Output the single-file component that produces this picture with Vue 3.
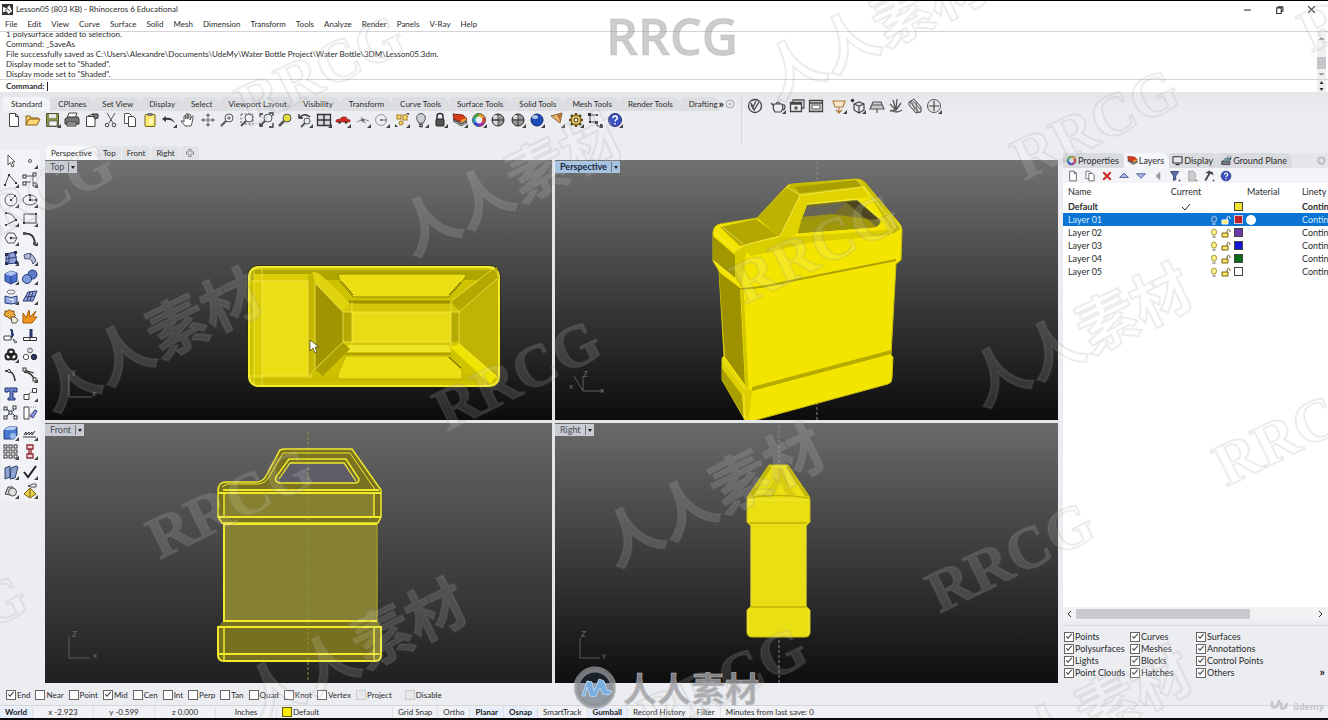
<script setup>
import { ref } from 'vue'

const menus = ['File', 'Edit', 'View', 'Curve', 'Surface', 'Solid', 'Mesh', 'Dimension', 'Transform', 'Tools', 'Analyze', 'Render', 'Panels', 'V-Ray', 'Help']
const history = [
  '1 polysurface added to selection.',
  'Command: _SaveAs',
  'File successfully saved as C:\\Users\\Alexandre\\Documents\\UdeMy\\Water Bottle Project\\Water Bottle\\3DM\\Lesson05.3dm.',
  'Display mode set to "Shaded".',
  'Display mode set to "Shaded".',
]
const toolTabs = ['Standard', 'CPlanes', 'Set View', 'Display', 'Select', 'Viewport Layout', 'Visibility', 'Transform', 'Curve Tools', 'Surface Tools', 'Solid Tools', 'Mesh Tools', 'Render Tools', 'Drafting']

const corner = '<path d="M16 12v4h-4z" fill="#444"/>'
const page = '<path d="M3.500 1.500h6l3 3v10h-9z M9.500 1.500v3h3" fill="#fff" stroke="#444"/>'
const lens = '<circle cx="10" cy="6" r="4" fill="#eef2f5" stroke="#555"/><path d="M7 9l-5 5" stroke="#555" stroke-width="2"/>'
const ball = (c, d) => `<circle cx="8" cy="8" r="6" fill="${c}" stroke="${d}"/><ellipse cx="6" cy="5" rx="3" ry="2" fill="#fff" opacity=".65"/>`
const help = '<circle cx="8" cy="8" r="6.500" fill="#3b50c0" stroke="#24307c"/><path d="M5.800 6.300q.2-2.300 2.300-2.300 2.200.1 2.200 2 0 1.200-1.400 1.800-.8.500-.8 1.700M8 11v1.500" fill="none" stroke="#fff" stroke-width="1.500"/>'
const wheel = '<g fill="none" stroke-width="3"><path d="M8 3a5 5 0 0 1 4.300 2.500" stroke="#e6a020"/><path d="M12.300 5.500a5 5 0 0 1 0 5" stroke="#d8402c"/><path d="M12.300 10.500A5 5 0 0 1 8 13" stroke="#b030b0"/><path d="M8 13a5 5 0 0 1-4.300-2.500" stroke="#3848d8"/><path d="M3.700 10.500a5 5 0 0 1 0-5" stroke="#20a0c0"/><path d="M3.700 5.500A5 5 0 0 1 8 3" stroke="#50b030"/></g><circle cx="8" cy="8" r="6.500" fill="none" stroke="#444" stroke-width=".8"/>'
const layerIcon = '<path d="M1 9l8 5 6-3-1-3z" fill="#f4f4ea" stroke="#444" stroke-width=".8"/><path d="M1 6l8 5 6-3v2l-6 3-8-5z" fill="#555"/><path d="M1 2l10 1 4 4-6 3-7-3z" fill="#d8401c" stroke="#802810"/><path d="M9 8l5-2v2l-5 3z" fill="#e8a030"/>'
const sq = (x, y) => `<rect x="${x}" y="${y}" width="3" height="3" fill="#fff" stroke="#333"/>`

const icons = {
  page,
  open: '<path d="M1 13V4h4l1 2h7v2" fill="#f3cf70" stroke="#8a5a10"/><path d="M1 13l3-6h11l-3 6z" fill="#ffd978" stroke="#8a5a10"/>',
  save: '<path d="M1.500 1.500h12v13h-12z" fill="#8a9650" stroke="#4d5530"/><rect x="4" y="2" width="7" height="4" fill="#e5e8ea"/><rect x="4" y="9" width="8" height="5" fill="#f5f5f5" stroke="#555" stroke-width=".7"/>' + corner,
  print: '<path d="M5 1h8l-2 5H3z" fill="#fff" stroke="#444"/><path d="M1 7l3-2h10l1 2v5H1z" fill="#777" stroke="#333"/><path d="M3 10h9v4H3z" fill="#ddd" stroke="#333"/><path d="M4 12h7" stroke="#333"/>',
  props: '<path d="M2.500 4.500h7l1.500 2v8h-8.500z" fill="#fff" stroke="#444"/><path d="M8 2l6 0v4l-3 1z" fill="#777" stroke="#333"/><path d="M4 4l5-2" stroke="#444"/>',
  cut: '<path d="M4 1l6 10M12 1L6 11" stroke="#555" fill="none"/><circle cx="4" cy="13" r="1.800" fill="none" stroke="#444"/><circle cx="11" cy="13" r="1.800" fill="none" stroke="#444"/>',
  copy: '<path d="M2.500 1.500h5l2 2v8h-7z" fill="#fff" stroke="#555"/><path d="M6.500 4.500h5l2 2v8h-7z" fill="#fff" stroke="#444"/>',
  paste: '<rect x="3" y="2.500" width="10" height="12" rx="1" fill="#ffe96a" stroke="#6d6425"/><rect x="5.500" y="1" width="5" height="3" fill="#777"/><path d="M8 6h3v6H6" fill="#fff6b8"/>',
  undo: '<path d="M1 7l4-3v2q6-1 9 5-4-4-9-3v2z" fill="#333"/>' + corner,
  hand: '<path d="M5 14L1 9q1-1 3 1V4q1-1 1.500 0L6 7V2q1-1 1.800 0V7l1-5q1-.5 1.500.5L10 8l2-4q1-.3 1.200.8L12 11l-1 3z" fill="#fff" stroke="#444" stroke-width=".9"/>',
  rotate: '<path d="M8 3v10M3 8h10" stroke="#666"/><path d="M8 1l2 3H6zM8 15l2-3H6zM1 8l3-2v4zM15 8l-3-2v4z" fill="#666"/>',
  zoom: lens + '<path d="M8 6h4M10 4v4" stroke="#666"/>',
  zoomWin: '<rect x="2" y="2" width="12" height="10" fill="none" stroke="#666" stroke-dasharray="2 1.500"/>' + lens,
  zoomExt: lens + '<path d="M2 5V2h3M11 1h4v3M15 11v4h-4M2 11v3h3" fill="none" stroke="#333" stroke-width="1.300"/>',
  zoomSel: '<circle cx="10" cy="6" r="4" fill="#e5dc40" stroke="#555"/><path d="M7 9l-5 5" stroke="#555" stroke-width="2.500"/>',
  zoomBack: '<path d="M2 2v4h4M2 6q5-6 11-1" fill="none" stroke="#333" stroke-width="1.400"/><circle cx="10" cy="9" r="3" fill="#e8eef2" stroke="#555"/><path d="M8 11l-4 4" stroke="#555" stroke-width="2"/>' + corner,
  grid4: '<path d="M1.500 2.500h13v11h-13z" fill="#d8dce0" stroke="#333" stroke-width="1.300"/><path d="M8 2v12M1 8h14" stroke="#333" stroke-width="1.500"/>' + corner,
  car: '<path d="M1 8l4-1 2-2h4l1 2 3 1v2H1z" fill="#d02a22" stroke="#8a1c18" stroke-width=".6"/><circle cx="4.500" cy="10.500" r="1.300" fill="#333"/><circle cx="11" cy="10.500" r="1.300" fill="#333"/>' + corner,
  cplane: '<path d="M2 10l6-3 6 2M6 5l3 5M5 8l6 3" stroke="#888" fill="none"/><circle cx="8" cy="8" r="1.500" fill="#666"/>' + corner,
  objSnap: '<circle cx="7" cy="8" r="5.500" fill="none" stroke="#999"/><path d="M7 8h6" stroke="#666"/><circle cx="7" cy="8" r="1" fill="#555"/>' + corner,
  points: '<rect x="3" y="3" width="4" height="4" fill="#ffdc6a" stroke="#a37818"/><rect x="9" y="3" width="4" height="5" fill="#ffdc6a" stroke="#a37818"/><circle cx="7" cy="11" r="2" fill="#ffdc6a" stroke="#a37818"/><path d="M12 1h3v2zM1 15v-3l3 3z" fill="#333"/>' + corner,
  bulb: '<path d="M5.500 11Q5 9 3.800 7.500 3 2 8 1.500 13 2 12.200 7.500 11 9 10.500 11z" fill="#ccd0d2" stroke="#555"/><path d="M6 12.500h4M6 14.500h4" stroke="#444" stroke-width="1.400"/>' + corner,
  lock: '<path d="M5 7V4q0-2.500 3-2.500T11 4v3" fill="none" stroke="#333" stroke-width="1.500"/><rect x="4" y="7" width="8" height="7" rx="1" fill="#555" stroke="#222"/>' + corner,
  layers: layerIcon + corner,
  wheel: wheel + corner,
  ballHalf: ball('#999', '#222') + '<path d="M8 2v12M2 8h12" stroke="#333"/><path d="M3 9h4.500v4.500Q4 13 3 9" fill="#ddd"/>',
  ballHalf2: ball('#999', '#222') + '<path d="M8 2v12M2 8h12" stroke="#333"/>' + corner,
  ballBlue: ball('#1c4cb8', '#10286a') + corner,
  cone: '<path d="M2 4l11-3-2 10z" fill="#e8b878" stroke="#8c5a28"/><path d="M8 3l3 6 1-7z" fill="#b87038"/>' + corner,
  gear: '<path d="M8 1v14M1 8h14M3 3l10 10M13 3L3 13" stroke="#5b4d1c" stroke-width="2.500"/><circle cx="8" cy="8" r="5" fill="#d8bc58" stroke="#5b4d1c"/><circle cx="8" cy="8" r="2" fill="#f0f0f0" stroke="#5b4d1c"/>' + corner,
  dims: '<path d="M3 3v7h6M4 3h6M10 11v3h3" fill="none" stroke="#444"/><path d="M1 1h3v3H1zM9 2h2v2H9zM2 9h2v2H2zM8 9h3v3H8zM13 12h2v3h-2z" fill="#333"/>' + corner,
  help: help + corner,
  vray: '<circle cx="8" cy="8" r="6.500" fill="none" stroke="#444" stroke-width="1.300"/><path d="M4 7l3 5 5-8M7 12L4 5M9 3l-3 6" fill="none" stroke="#444" stroke-width="1.300"/>',
  teapot: '<path d="M4 6h8q2 4-1 8H5Q2 10 4 6zM6 6q2-4 4 0M4 8L1 5M12 7q3-1 3 2t-3 3" fill="none" stroke="#444" stroke-width="1.200"/>' + corner,
  frames: '<path d="M4 4V2h11v8h-2" fill="none" stroke="#555" stroke-width="1.300"/><path d="M1.500 4.500h11v9h-11zM2 6h10" fill="#eee" stroke="#444" stroke-width="1.300"/><circle cx="7" cy="10" r="1.800" fill="#555"/>',
  frame: '<path d="M1.500 2.500h13v11h-13zM2 5h12" fill="#ddd" stroke="#444" stroke-width="1.300"/><rect x="4" y="7" width="8" height="4" fill="#f4f4f4" stroke="#555"/>',
  light: '<path d="M2 3h12l-2 6H4zM8 9v6M5 12l3 3 3-3" fill="#f8e6cf" stroke="#b07838" stroke-width="1.100"/>' + corner,
  box: '<path d="M4 6l5-2 5 2v6l-5 3-5-3zM4 6l5 2 5-2M9 8v7" fill="none" stroke="#444" stroke-width="1.200"/><circle cx="2.500" cy="2.500" r="1.700" fill="#333"/>' + corner,
  dome: '<path d="M1 11l3-7h8l3 7zM3 7h10M8 11v4" fill="#ccc" stroke="#555" stroke-width="1.200"/>',
  grass: '<path d="M8 12L5 2M8 12l1-11M8 12l5-7M8 12L2 6M3 12q5 4 11 0M8 12l-6 1" fill="none" stroke="#555" stroke-width="1.300"/>',
  clip: '<path d="M2 4l5-3 7 8v5L9 15 2 7z" fill="#ddd" stroke="#444"/><path d="M3 4l9 10M6 3l8 9M4 2l4 10M9 4l1 10" stroke="#666"/>',
  plusBall: '<circle cx="8" cy="8" r="6.500" fill="#e4e6e8" stroke="#555"/><path d="M8 3v10M3 8h10" fill="none" stroke="#444" stroke-width="1.200"/>' + corner,
  arrow: '<path d="M5 2v10l2.500-2.500L9 14l2-1-2-4h3z" fill="#fff" stroke="#555"/>',
  dot: '<circle cx="8" cy="8" r="1.500" fill="#fff" stroke="#555"/>' + corner,
  poly: '<path d="M2 13L6 3l7 8" fill="none" stroke="#555"/><path d="M1 12h2v2H1zM5 2h2v2H5zM12 10h2v2h-2z" fill="#333"/>' + corner,
  curve: '<path d="M3 4h9q-3 4 1 9M3 10h6" fill="none" stroke="#555"/>' + sq(1, 3) + sq(11, 1) + sq(11, 11) + sq(1, 10) + corner,
  circle: '<circle cx="8" cy="8" r="6" fill="none" stroke="#555"/><path d="M8 8l4-4" stroke="#555"/><path d="M7 7h2v2H7zM11 3h2v2h-2z" fill="#333"/>' + corner,
  ellipse: '<ellipse cx="8" cy="8" rx="7" ry="5" fill="none" stroke="#555"/><path d="M8 3v5h6" fill="none" stroke="#555"/><path d="M7 7h2v2H7zM7 2h2v2H7zM13 7h2v2h-2z" fill="#333"/>' + corner,
  arc: '<path d="M3 2q6 0 10 7L3 14" fill="none" stroke="#555"/><path d="M2 1h2v2H2zM12 8h2v2h-2zM2 13h2v2H2z" fill="#333"/>' + corner,
  rect: '<rect x="2" y="3" width="12" height="9" fill="none" stroke="#444"/><path d="M1 11h2v2H1zM13 2h2v2h-2z" fill="#333"/>' + corner,
  polygon: '<path d="M2 8l3-5h6l3 5-3 5H5z" fill="none" stroke="#555"/><path d="M8 8h6" stroke="#555"/><circle cx="8" cy="8" r="1.300" fill="#333"/>' + corner,
  fillet: '<path d="M2 4q10-2 11 10" fill="none" stroke="#333" stroke-width="1.800"/><path d="M1 2h3v3H1zM11 12h3v3h-3z" fill="#555"/>' + corner,
  surfPts: '<path d="M3 4l9-2 2 11-11 1z" fill="#8fa0da" stroke="#303a70"/><path d="M6 3v11M3 9l11-2" stroke="#303a70"/><path d="M2 3h3v3H2zM11 1h3v3h-3zM12 11h3v3h-3zM2 12h3v3H2z" fill="#28305c"/>' + corner,
  sweep: '<path d="M2 5q8-5 12 6l-3 3Q9 7 3 9z" fill="#b4bbd4" stroke="#444c78"/><path d="M9 3l-1 5" stroke="#444c78"/>' + corner,
  cube: '<path d="M2 5l6-3 6 2v8l-6 3-6-3z" fill="#4d70cc" stroke="#233a80"/><path d="M2 5l6-3 6 2-6 3z" fill="#b4c8f4"/><path d="M8 7v8" stroke="#233a80"/>' + corner,
  spheres: '<circle cx="10.500" cy="5.500" r="4.500" fill="#5c7cc8" stroke="#26386e"/><circle cx="5" cy="10" r="4.500" fill="#7f9be0" stroke="#26386e"/>' + corner,
  revolve: '<ellipse cx="8" cy="3" rx="4" ry="2" fill="none" stroke="#777"/><path d="M2 7q6 3 12 0v7q-6 2-12 0z" fill="#92a6e0" stroke="#2c3c78"/><path d="M6 10q2 1 4 0v4" fill="none" stroke="#fff"/>' + corner,
  mesh: '<path d="M1 12l5-9 9-1-4 10z" fill="#96a6da" stroke="#2c3870"/><path d="M4 8l9-1M8 3L5 12M11 3l-3 9" stroke="#2c3870"/>' + corner,
  puzzle: '<path d="M2 3h3q1-3 3 0h3v3q3 1 0 3v2H7l-2-2-3-1q-2-2 0-3z" fill="#eaa83a" stroke="#885210"/><path d="M8 9h4l3 3-2 3H9z" fill="#f5edd8" stroke="#555"/>',
  explode: '<path d="M1 15L1 5l3 5 3-8 1 7 6-6-3 6 4 0-5 6z" fill="#f0961c" stroke="#a85c08"/>',
  trim: '<path d="M8 1l2 6-3 4M9 2v5" stroke="#26386e" stroke-width="2" fill="none"/><path d="M1 8h7v4H1z" fill="#fff" stroke="#444"/><path d="M10 11l4 3-2 1z" fill="#fff" stroke="#555"/>',
  split: '<path d="M9 1v9" stroke="#26386e" stroke-width="3"/><path d="M1.500 9.500h13v3h-13zM8 10v3" fill="#fff" stroke="#333"/>',
  group: '<g fill="none" stroke="#222" stroke-width="2"><circle cx="8" cy="5.500" r="3"/><circle cx="5.500" cy="9.500" r="3"/><circle cx="10.500" cy="9.500" r="3"/></g>' + corner,
  ungroup: '<circle cx="8" cy="3.500" r="2.500" fill="#ddd" stroke="#666"/><circle cx="4" cy="10" r="2.700" fill="#fff" stroke="#555"/><circle cx="12" cy="10" r="2.700" fill="#26386e" stroke="#222"/>',
  ptsOn: '<path d="M2 4q9-1 10 10" fill="none" stroke="#333" stroke-width="1.600"/><circle cx="6" cy="4" r="1.500" fill="#fff" stroke="#333"/>',
  ptsEdit: '<path d="M2 5q8 0 11 9M2 3l10 3" fill="none" stroke="#333" stroke-width="1.300"/>' + sq(1, 1) + sq(11, 11) + corner,
  text: '<path d="M2 2h12v4h-3V5h-1v7h2v2H5v-2h2V5H5v1H2z" fill="#6d86d4" stroke="#26346e"/>',
  scale: '<path d="M2 8.500h5v5H2zM10.500 2.500h4v4h-4z" fill="#fff" stroke="#444"/><path d="M7 8l4-3" stroke="#333" stroke-dasharray="2 1"/>' + corner,
  block: sq(1, 2) + sq(10, 1) + sq(6, 6) + sq(1, 11) + sq(11, 11) + '<path d="M4 4l2 2M10 9l2 2M4 11l2-2M10 6l1-2" stroke="#26386e"/>',
  align: '<path d="M2 2h5v12H2z" fill="#fff" stroke="#444"/><path d="M8 11l5-6 2 1-4 7z" fill="#8c96d8" stroke="#333c80"/><path d="M9 2h5" stroke="#888" stroke-dasharray="1 1"/>',
  blueBox: '<path d="M1 5l4-3h9v8l-3 4H1z" fill="#4a78d0" stroke="#20387c"/><path d="M1 5l4-3h9l-3 3z" fill="#b6cef6"/><circle cx="10" cy="11" r="3" fill="#9cbbe8"/>' + corner,
  curveRow: '<path d="M1 12h13M2 10l2-3v3l3-3v3l3-3v3l3-4" stroke="#333" fill="none"/>' + corner,
  array: [1, 6, 11].map((y) => sq(1, y) + sq(6, y) + sq(11, y)).join('') + corner,
  ctrlRed: '<path d="M5 1h6v4H5zM7 5h2v5H7zM5 10h6v4H5z" fill="#f4d8d8" stroke="#8e2830" stroke-width="1.300"/>' + corner,
  books: '<path d="M2 4l5-2v11l-5 2zM8 4l5-2 2 1-3 11-5 1z" fill="#8ea4d0" stroke="#34436e"/>' + corner,
  check: '<path d="M2 8l4 5 8-11" fill="none" stroke="#222" stroke-width="2"/>' + corner,
  shapes: '<path d="M2 11l3-7h5l-2 8z" fill="#c8cace" stroke="#444"/><circle cx="9.500" cy="9" r="4" fill="#ddd" stroke="#555"/>' + corner,
  pyramid: '<path d="M2 11l6-6 6 6-6 4z" fill="#e6cf48" stroke="#776210"/><path d="M8 5v10" stroke="#776210"/><path d="M6 3l5-2h3v3H9z" fill="#fff" stroke="#444"/>' + corner,
  del: '<path d="M3 3l10 10M13 3L3 13" stroke="#c8261c" stroke-width="2.500"/>',
  up: '<path d="M2 10l6-6 6 6z" fill="#a5b4e4" stroke="#3c4a8c"/>',
  down: '<path d="M2 5l6 6 6-6z" fill="#a5b4e4" stroke="#3c4a8c"/>',
  left: '<path d="M11 2L5 8l6 6z" fill="#999"/>',
  filter: '<path d="M2 2h11L9 8v5l-3 1V8z" fill="#5d6fa8" stroke="#2a3560"/><path d="M13 13h2v2h-2z" fill="#333"/>',
  sheet: '<path d="M3.500 1.500h6l3 3v10h-9z" fill="#ccc" stroke="#999"/><path d="M13 13h2v2h-2z" fill="#777"/>',
  hammer: '<path d="M3 4l5-3 5 2 1 4-4-2z" fill="#444"/><path d="M9 4L3 14" stroke="#444" stroke-width="2.500"/><path d="M13 13h2v2h-2z" fill="#333"/>',
  helpSmall: help,
  wheelSmall: wheel,
  layersSmall: layerIcon,
  monitor: '<path d="M1.500 2.500h13v9h-13z" fill="#e4e8ee" stroke="#333" stroke-width="1.500"/><path d="M5 14h6M8 12v2" stroke="#333" stroke-width="1.500"/>',
  ground: '<path d="M1 9h12v5H1z" fill="#778" stroke="#334"/><path d="M3 9l3-4h9l-3 4z" fill="#7db0a8" stroke="#455"/><path d="M10 1v5h4V1" fill="none" stroke="#357"/>',
}

const standard = ['page', 'open', 'save', 'print', 'props', 'cut', 'copy', 'paste', 'undo', 'hand', 'rotate', 'zoom', 'zoomWin', 'zoomExt', 'zoomSel', 'zoomBack', 'grid4', 'car', 'cplane', 'objSnap', 'points', 'bulb', 'lock', 'layers', 'wheel', 'ballHalf', 'ballHalf2', 'ballBlue', 'cone', 'gear', 'dims', 'help']
const render = ['vray', 'teapot', 'frames', 'frame', 'light', 'box', 'dome', 'grass', 'clip', 'plusBall']
const side = ['arrow', 'dot', 'poly', 'curve', 'circle', 'ellipse', 'arc', 'rect', 'polygon', 'fillet', 'surfPts', 'sweep', 'cube', 'spheres', 'revolve', 'mesh', 'puzzle', 'explode', 'trim', 'split', 'group', 'ungroup', 'ptsOn', 'ptsEdit', 'text', 'scale', 'block', 'align', 'blueBox', 'curveRow', 'array', 'ctrlRed', 'books', 'check', 'shapes', 'pyramid']
const layerTools = ['page', 'copy', 'del', 'up', 'down', 'left', 'filter', 'sheet', 'hammer', 'helpSmall']

const panelTabs = [
  { name: 'Properties', icon: 'wheelSmall' },
  { name: 'Layers', icon: 'layersSmall' },
  { name: 'Display', icon: 'monitor' },
  { name: 'Ground Plane', icon: 'ground' },
]
const layers = [
  { name: 'Default', color: '#f2e230', current: true },
  { name: 'Layer 01', color: '#c02028', selected: true },
  { name: 'Layer 02', color: '#6a3aa8' },
  { name: 'Layer 03', color: '#1414d8' },
  { name: 'Layer 04', color: '#0c6a14' },
  { name: 'Layer 05', color: '#ffffff' },
]
const filters = ref(['Points', 'Curves', 'Surfaces', 'Polysurfaces', 'Meshes', 'Annotations', 'Lights', 'Blocks', 'Control Points', 'Point Clouds', 'Hatches', 'Others'].map((name) => ({ name, on: true })))
const snaps = ref(['End', 'Near', 'Point', 'Mid', 'Cen', 'Int', 'Perp', 'Tan', 'Quad', 'Knot', 'Vertex', 'Project', 'Disable'].map((name) => ({ name, on: name === 'End' || name === 'Mid' })))
const command = ref('')

const toggles = [
  { name: 'Grid Snap' }, { name: 'Ortho' }, { name: 'Planar', on: true }, { name: 'Osnap', on: true },
  { name: 'SmartTrack' }, { name: 'Gumball', on: true }, { name: 'Record History' }, { name: 'Filter' },
]

const latinMarks = [[30, 198], [320, 70], [230, 503], [517, 375], [815, 248], [1095, 124], [1382, -4], [-57, 630], [723, 682], [1010, 557], [1297, 430]]
const hanMarks = [[150, 340], [510, 184], [875, 28], [355, 650], [713, 495], [1080, 335], [1080, 718]]
</script>

<template>
  <div class="app">
    <header class="title">
      <svg class="logo" viewBox="0 0 12 12"><rect width="12" height="12" fill="#333" /><path d="M1 3l4 2 3-4 3 7-4 3-2-3-4 1z" fill="#fff" /><path d="M3 7l3-2 3 3" fill="none" stroke="#333" /></svg>
      <h1>Lesson05 (803 KB) - Rhinoceros 6 Educational</h1>
      <div class="win">
        <button aria-label="Minimize"><svg viewBox="0 0 8 8"><path d="M1 4.500h6" /></svg></button>
        <button aria-label="Restore"><svg viewBox="0 0 8 8"><path d="M1.500 2.500h4v5h-4zM3 2.500v-1h4v4h-1" /></svg></button>
        <button aria-label="Close"><svg viewBox="0 0 8 8"><path d="M1 1l6 6M7 1L1 7" /></svg></button>
      </div>
    </header>
    <nav class="menu"><button v-for="m in menus" :key="m">{{ m }}</button></nav>

    <section class="command">
      <div class="history">
        <p v-for="(line, i) in history" :key="i">{{ line }}</p>
        <div class="vbar">
          <svg viewBox="0 0 8 8"><path d="M2 5l2-2 2 2" /></svg>
          <i></i>
          <svg viewBox="0 0 8 8"><path d="M2 3l2 2 2-2" /></svg>
        </div>
      </div>
      <div class="prompt">
        <label for="cmd">Command:</label><span class="caret"></span>
        <input id="cmd" v-model="command" type="text" />
        <svg class="spin" viewBox="0 0 8 12"><path d="M4 1l2 3H2zM4 11l2-3H2zM1 6h6" /></svg>
      </div>
    </section>

    <section class="toolbars">
      <div class="standard">
        <div class="tabs">
          <button v-for="(t, i) in toolTabs" :key="t" :class="{ on: i === 0 }">{{ t }}</button>
          <b>»</b>
          <svg viewBox="0 0 12 12"><circle cx="6" cy="6" r="4" fill="none" stroke="#aaa" /><circle cx="6" cy="6" r="1.500" fill="#bbb" /></svg>
        </div>
        <div class="icons">
          <button v-for="n in standard" :key="n" :aria-label="n"><svg viewBox="0 0 16 16" fill="none" v-html="icons[n]"></svg></button>
        </div>
      </div>
      <div class="render">
        <button v-for="n in render" :key="n" :aria-label="n" :class="'r-' + n"><svg viewBox="0 0 16 16" v-html="icons[n]"></svg></button>
      </div>
    </section>

    <main>
      <aside class="side">
        <button v-for="n in side" :key="n" :aria-label="n"><svg viewBox="0 0 16 16" v-html="icons[n]"></svg></button>
      </aside>

      <section class="center">
        <div class="viewtabs">
          <button class="on">Perspective</button><button>Top</button><button>Front</button><button>Right</button>
          <button aria-label="Add viewport"><svg viewBox="0 0 8 8"><path d="M4 0v8M0 4h8" stroke="#888" stroke-width="3" /><path d="M4 1v6M1 4h6" stroke="#fff" /></svg></button>
        </div>
        <div class="views">
          <div class="view deep">
            <button class="label">Top<i></i></button>
            <svg class="scene" viewBox="45 160 507 260">
              <rect x="247" y="265" width="254" height="123" rx="11" fill="#2a2900" opacity=".6" />
              <rect x="249" y="267" width="250" height="119" rx="9" fill="#cfc300" stroke="#f2ea30" stroke-width="2" />
              <rect x="252" y="270" width="244" height="10" fill="#b0a600" />
              <rect x="252" y="375" width="244" height="7" fill="#c9bd00" />
              <path d="M254 274h58v104h-58z" fill="#dccf08" />
              <path d="M262 281h46v95h-46z" fill="#ecde14" />
              <path d="M308 272l8 8v90l-8 8z" fill="#c4b800" />
              <path d="M315 283l28 29v30l-28 27z" fill="#a09400" />
              <path d="M459 312l39-34v100l-39-34z" fill="#c0b304" />
              <path d="M450 302l47-35 2 11-40 34z" fill="#b4a900" />
              <path d="M343 302h108l8 9v34l-8 7H343z" fill="#d3c708" />
              <path d="M343 312h9v30h-9zM451 312h8v30h-8z" fill="#b5a904" />
              <path d="M352 312h99v30h-99z" fill="#e9dc14" />
              <path d="M345 352h106l-2-7H348z" fill="#efe528" />
              <path d="M343 302h108" stroke="#9c9100" stroke-width="3" />
              <path d="M343 354h108" stroke="#aca100" stroke-width="2" />
              <path d="M312 272q6 0 9 3l29 28-8 8-27-28z" fill="#e0d410" />
              <path d="M315 370l27-28 8 7-27 27z" fill="#a99e00" />
              <path d="M450 347l10-3 37 32-7 8z" fill="#efe404" />
              <path d="M338 274h129l-5 8-13 15h-96l-13-15z" fill="#ebde12" stroke="#968b00" />
              <path d="M346 356h101l15 14v9H338v-6z" fill="#ebde12" stroke="#bdb104" />
              <path d="M341 281l12 14M449 295l12-13M449 357l12 11" stroke="#5f5800" />
              <g fill="none" stroke="#f4ec50" opacity=".75"><path d="M254 268v117M262 268v117M308 281v95M315 283v86l-8 9M250 281h58M250 376h62M343 312h116M343 342h108M451 302v45M459 311v34M343 312v30M352 302v45M315 283l28 29M343 342l-28 27M459 312l39-34M459 344l38 34M450 302l44-34" /><path d="M250 277q0-8 8-9M250 377q0 8 8 9M489 268q9 1 9 9M489 385q9-1 9-9" /></g>
              <g class="axis"><path d="M69 374v23h23" /><text x="71" y="376">Y</text><text x="92" y="396">x</text></g>
              <path d="M310 340v11l3-3 2 5 2-1-2-5h4z" fill="#fff" stroke="#443b00" stroke-width=".7" />
            </svg>
          </div>

          <div class="view deep">
            <button class="label active">Perspective<i></i></button>
            <svg class="scene" viewBox="555 160 503 260">
              <path class="dash" d="M817 162v258" />
              <path fill-rule="evenodd" d="M713 232q1-7 7-8l37-6 29-31q2-3 6-3l64-5q7 0 11 6l32 38q3 3 3 7l-1 30-5 4-5 91 2 2-1 21q0 5-4 6L756 420q-6 2-11 0l-23-40v-22l2-2-5-85-6-10zM807 205l50-5 23 20q1 5-5 7l-77 6z" fill="#f3e500" stroke="#c9bf0a" />
              <path d="M807 205l50-5 23 20q1 5-5 7l-77 6z" fill="#77702a" />
              <path d="M807 207l39-4-15 14-31 5z" fill="#666558" /><path d="M846 202l11-1 21 18-11 1z" fill="#4c4620" />
              <path d="M798 233l3-16 30-3 37 5 8 8z" fill="#aca300" opacity=".75" />
              <path d="M713 236l22 19v23l-22-18z" fill="#a39700" />
              <path d="M719 272l21 16 5 97-20-28z" fill="#9d9100" />
              <path d="M722 368l20 27 2 23-22-38z" fill="#aa9f00" />
              <path d="M722 357l22 29 8 5-3 28q-5 1-7-24l-20-28z" fill="#ddcf00" />
              <path d="M735 250l12-5-5 43-7-10z" fill="#d8cb00" />
              <path d="M720 227l36-8 23 17-39 10z" fill="#b3a700" />
              <path d="M757 218l30-31 13 8-20 42z" fill="#bdb200" />
              <path d="M787 187l5-3 65-4 7 7-64 8z" fill="#c6ba00" /><path d="M795 187l61-7 6 6-62 7z" fill="#aa9f00" />
              <path d="M856 180l9 2 36 46-8 6-28-47z" fill="#cabd00" />
              <path d="M800 195l64-8 5 10-62 7-11 31-17 4z" fill="#e0d300" />
              <path d="M740 246l40-9 24-1 70-5 20-2-5 6-76 7-62 14z" fill="#dacd00" />
              <path d="M740 289q28-2 50-8l106-21" fill="none" stroke="#aca100" stroke-width="2" />
              <path d="M752 391l139-37v-4L752 387z" fill="#b7ab00" />
              <path d="M742 289l5 98" stroke="#d2c600" stroke-width="3" />
              <g fill="none" stroke="#faf36a" opacity=".65"><path d="M714 232l22 19q7-6 16-8l28-7 20-40M720 225l23 19M787 187l13 8 64-8 32 41M857 180l44 49M714 261l22 18M722 360l24 30M744 393v26M807 204l50-5 24 20" /></g>
              <g class="axis"><path d="M574 376l9 15h21M583 391v-15" /><text x="569" y="389">x</text><text x="583" y="377">Z</text><text x="600" y="393">x</text></g>
            </svg>
          </div>

          <div class="view">
            <button class="label">Front<i></i></button>
            <svg class="scene" viewBox="45 423 507 260">
              <path fill-rule="evenodd" d="M218 492q0-9 8-10h29q8 0 11-6l13-24 3-3h70l29 42v27l-3 6v97l3 6v28q0 6-6 6H224q-6 0-6-6v-28l5-6v-97l-5-6zM289 463l-13 18 4 2h75l3-3-13-17z" fill="#7b741e" opacity=".95" />
              <path d="M225 524h152v97H225z" fill="#858034" />
              <path d="M224 493h150v24H224z" fill="#87812f" />
              <path d="M289 463h56l13 18-3 2h-75l-4-2z" fill="#6b6684" opacity=".35" />
              <path class="dash green" d="M308 432v250" />
              <g fill="none" stroke="#f1e92a" stroke-width="2">
                <path d="M218 517v-26q0-9 8-9h29q8 0 11-6l14-26 4-1h68l29 41v27l-3 6H222z" stroke-width="1.500" />
                <path d="M222 487l5-3h30q8 0 12-7l14-24h67l26 38" stroke-width="1" />
                <path d="M289 459h57l13 20q0 4-4 4h-75q-6-1-4-6z" stroke-width="1.500" /><path d="M290 463h54l12 18M290 463l-11 16" stroke-width="1.300" />
                <path d="M223 490h156M218 493h163M223 524h154M223 621h154" />
                <path d="M218 517h163" />
                <path d="M218 627h163v28q0 6-6 6H224q-6 0-6-6zM218 654h163" />
                <path d="M224 493v24M374 493v24M224 628v32M374 628v32" stroke-width="1.500" /><path d="M224 524v97" /><path d="M377 524v97" stroke-width="1" opacity=".3" />
              </g>
              <g class="axis"><path d="M69 636v22h21" /><text x="72" y="637">Z</text><text x="93" y="658">x</text></g>
            </svg>
          </div>

          <div class="view deeper">
            <button class="label">Right<i></i></button>
            <svg class="scene" viewBox="555 423 503 260">
              <path class="dash" d="M779 425v258" />
              <path d="M769 465h19l21 31q1 2 1 5v21l-4 4v80l4 4v22q0 5-5 5h-53q-5 0-5-5v-22l4-4v-80l-4-4v-21q0-3 1-5z" fill="#eadf12" stroke="#c7bd10" />
              <path d="M769 466l-21 31 5-1 19-29zM788 466l21 31-4-1-19-29z" fill="#c1b60a" />
              <path d="M775 468h8l6 18 7 10h-9l-7-14-6 14h-12l11-14z" fill="#d8cb10" />
              <path d="M748 498q31-5 61 0M749 523h58M750 607h57" fill="none" stroke="#c0b408" stroke-width="1.500" />
              <path d="M748 500h61M751 526v80M806 526v80M748 611v22M809 611v22" stroke="#f8f058" opacity=".7" />
              <g class="axis"><path d="M580 638v20h20" /><text x="581" y="637">Z</text><text x="602" y="658">y</text></g>
            </svg>
          </div>
        </div>
      </section>

      <aside class="panel">
        <div class="ptabs">
          <button v-for="t in panelTabs" :key="t.name" :class="{ on: t.name === 'Layers' }"><svg viewBox="0 0 16 16" fill="none" v-html="icons[t.icon]"></svg>{{ t.name }}</button>
          <svg class="cog" viewBox="0 0 12 12"><circle cx="6" cy="6" r="3.500" fill="none" stroke="#bbb" stroke-width="2" /></svg>
        </div>
        <div class="ltools"><button v-for="n in layerTools" :key="n" :aria-label="n"><svg viewBox="0 0 16 16" v-html="icons[n]"></svg></button></div>
        <div class="tablebox">
          <table>
            <colgroup><col /><col class="c-cur" /><col class="c-ic" /><col class="c-ic" /><col class="c-ic" /><col class="c-mat" /><col class="c-line" /></colgroup>
            <thead><tr><th>Name</th><th class="mid">Current</th><th></th><th></th><th></th><th class="mat">Material</th><th>Linety</th></tr></thead>
            <tbody>
              <tr v-for="l in layers" :key="l.name" :class="{ sel: l.selected, bold: l.current }">
                <td>{{ l.name }}</td>
                <td class="mid"><svg v-if="l.current" class="tick" viewBox="0 0 10 8"><path d="M1 4l3 3 5-6" fill="none" stroke="#222" /></svg></td>
                <td class="mid"><svg v-if="!l.current" viewBox="0 0 10 10"><path d="M3.500 7Q1.500 4 3 2q2-2 4 0 1.500 2-.5 5z" :fill="l.selected ? '#2c7ac8' : '#fff48a'" :stroke="l.selected ? '#b8d4f0' : '#8c8020'" stroke-width=".8" /><path d="M3.500 9h3" :stroke="l.selected ? '#fff' : '#555'" /></svg></td>
                <td class="mid"><svg v-if="!l.current" viewBox="0 0 10 10"><path d="M1 5h6v4H1z" fill="#ffe868" :stroke="l.selected ? '#fff' : '#776012'" /><path d="M6 5V2.500Q7.500 0 9 2.500V4" fill="none" :stroke="l.selected ? '#fff' : '#665a20'" /></svg></td>
                <td class="mid"><i class="swatch" :style="{ background: l.color }"></i></td>
                <td><i v-if="l.selected" class="ball"></i></td>
                <td>Contin</td>
              </tr>
            </tbody>
          </table>
        </div>
        <div class="hbar">
          <svg viewBox="0 0 8 8"><path d="M5 1L2 4l3 3" /></svg>
          <span><i></i></span>
          <svg viewBox="0 0 8 8"><path d="M3 1l3 3-3 3" /></svg>
        </div>
        <div class="filters">
          <label v-for="f in filters" :key="f.name"><input v-model="f.on" type="checkbox" />{{ f.name }}</label>
          <b>»</b>
        </div>
      </aside>
    </main>

    <section class="snaps">
      <label v-for="s in snaps" :key="s.name" :class="s.name.toLowerCase()"><input v-model="s.on" type="checkbox" />{{ s.name }}</label>
    </section>
    <footer class="status">
      <button class="world">World</button>
      <span class="coord">x -2.923</span><span class="coord">y -0.599</span><span class="coord">z 0.000</span><span class="coord">Inches</span>
      <span class="layer"><i></i>Default</span>
      <button v-for="t in toggles" :key="t.name" :class="{ on: t.on }">{{ t.name }}</button>
      <span class="saved">Minutes from last save: 0</span>
    </footer>

    <svg class="marks" viewBox="0 0 1328 720" preserveAspectRatio="xMinYMin meet" aria-hidden="true">
      <g class="mark">
        <text v-for="(p, i) in latinMarks" :key="'l' + i" class="latin" :transform="`translate(${p[0]} ${p[1]}) rotate(-26)`" y="20">RRCG</text>
        <text v-for="(p, i) in hanMarks" :key="'h' + i" class="han" :transform="`translate(${p[0]} ${p[1]}) rotate(-26)`" y="22">人人素材</text>
      </g>
      <text class="head" x="672" y="55">RRCG</text>
      <circle cx="595" cy="688" r="18" fill="#273746" fill-opacity=".45" stroke="#8f9296" stroke-width="5" stroke-opacity=".8" />
      <circle cx="595" cy="688" r="21" fill="none" stroke="#c2c4c6" stroke-opacity=".7" />
      <path d="M582 696l5-15 5 1 2 9 5-12 5 2 3 9 5 1-3 4-6-1-3-6-5 9-5-1-3-9-2 9z" fill="#78aee0" stroke="#b8d4ee" />
      <text class="brand" x="691" y="702">人人素材</text>
      <path d="M1272 701v5q4 4 6-2l1-4M1281 702v6q5 2 6-5" fill="none" stroke="#c3c5c9" stroke-width="2.500" />
      <text class="udemy" x="1293" y="710">ûdemy</text>
    </svg>
  </div>
</template>

<style>
body { margin: 0; }
</style>

<style scoped>
.app { position: relative; overflow: hidden; box-sizing: border-box; min-height: 100vh; display: flex; flex-direction: column; border-top: 1px solid #000; border-bottom: 2px solid #0a0a0a; background: #ebedf1; color: #2c2c2c; font: 8px/10px Lato, "Open Sans", sans-serif; }
button { appearance: none; border: 0; padding: 0; margin: 0; background: none; font: inherit; color: inherit; text-align: left; white-space: nowrap; }
svg { display: block; flex: none; }
h1, p { margin: 0; font: inherit; }

.title { display: flex; align-items: center; height: 16px; padding: 0 12px 0 2px; background: #fff; }
.logo { width: 11px; height: 11px; }
.title h1 { margin-left: 3px; flex: 1; }
.win { display: flex; gap: 23px; }
.win svg { width: 9px; height: 9px; fill: none; stroke: #333; stroke-width: 1; }
.menu { display: flex; gap: 10px; height: 14px; align-items: center; padding-left: 5px; background: #fff; border-bottom: 1px solid #d4d4d8; }

.command { background: #fff; }
.history { position: relative; height: 47px; padding-left: 6px; overflow: hidden; display: flex; flex-direction: column; justify-content: flex-end; border-bottom: 1px solid #d5d5d9; }
.history p { flex: none; line-height: 10px; white-space: nowrap; }
.vbar { position: absolute; right: 2px; top: 0; bottom: 0; width: 9px; background: #f0f0f2; display: flex; flex-direction: column; justify-content: space-between; padding: 3px 0 1px; }
.vbar svg { width: 9px; height: 8px; fill: none; stroke: #333; }
.vbar i { height: 12px; margin-top: 12px; background: #c4c6ca; }
.prompt { display: flex; align-items: center; height: 12px; padding: 0 2px 0 6px; }
.prompt label { font-weight: 700; }
.prompt input { flex: 1; border: 0; outline: 0; padding: 0; height: 10px; font: inherit; background: none; }
.caret { width: 1px; height: 9px; margin-left: 3px; background: #222; }
.spin { width: 9px; height: 12px; fill: #333; background: #eee; }

.toolbars { display: flex; height: 53px; padding-top: 4px; box-sizing: border-box; background: linear-gradient(#e4e6ea, #ebedf1 20px); }
.standard { width: 741px; border-right: 1px solid #d4d6da; }
.tabs { display: flex; height: 15px; align-items: center; margin-left: 3px; }
.tabs button { padding: 0 8px; line-height: 14px; background: #dcdee2; border-radius: 4px 8px 0 0; }
.tabs button.on { background: #f3f4f7; }
.tabs button:last-of-type { padding-right: 1px; }
.tabs b { font-size: 12px; }
.tabs svg { width: 12px; height: 12px; }
.icons { display: flex; justify-content: space-between; width: 617px; margin: 1px 0 0 6px; }
.icons svg, .side svg { width: 16px; height: 16px; }
.render { display: flex; align-items: flex-start; gap: 3px; padding: 2px 0 0 5px; }
.render svg { width: 16px; height: 16px; }
.render .r-teapot { margin-left: 4px; }
.render .r-light { margin-left: 4px; }

main { flex: 1; display: flex; min-height: 0; }
.side { flex: none; width: 39px; height: 350px; margin: 5px 3px 0 1px; padding-top: 1px; display: grid; grid-template-columns: 1fr 1fr; grid-auto-rows: 1fr; justify-items: center; align-items: center; background: #f1f3f7; }
.side + .center { margin-left: 2px; }

.center { flex: 1; min-width: 0; display: flex; flex-direction: column; }
.viewtabs { display: flex; height: 15px; padding: 1px 0 0 1px; box-sizing: border-box; gap: 1px; }
.viewtabs button { padding: 0 5px; line-height: 14px; background: #e1e3e7; border-radius: 4px 4px 0 0; display: flex; align-items: center; }
.viewtabs .on { background: #f7f8fa; }
.viewtabs svg { width: 8px; height: 8px; }
.views { flex: 1; display: grid; grid-template-columns: 507fr 503fr; grid-template-rows: 1fr 1fr; gap: 3px; background: #e4e5e9; }
.view { position: relative; min-width: 0; overflow: hidden; background: linear-gradient(#676767, #202020); }
.view.deep { background: linear-gradient(#717171, #0c0c0c); }
.view.deeper { background: linear-gradient(#6a6a6a, #0e0e0e); }
.scene { width: 100%; height: 100%; position: absolute; inset: 0; }
.label { position: absolute; z-index: 1; left: 0; top: 1px; display: flex; align-items: center; gap: 4px; height: 12px; padding: 0 2px 0 5px; background: #c9ccd2; color: #4a4e58; font-size: 9px; }
.label.active { background: #a6c3e2; color: #16263a; font-weight: 700; }
.label i { display: flex; align-items: center; height: 10px; padding-left: 2px; border-left: 1px solid #777; }
.label i::after { content: ""; border: 2px solid transparent; border-top: 3px solid #222; border-bottom: 0; }
.dash { stroke: #888; stroke-width: 1; stroke-dasharray: 3 2; }
.dash.green { stroke: #8a9440; }
.axis { fill: none; stroke: #5d5d5d; stroke-width: 1; }
.axis text { fill: #707070; stroke: none; font-size: 8px; }

.panel { width: 265px; flex: none; margin: 8px 0 0 5px; display: flex; flex-direction: column; font-size: 9px; }
.ptabs { display: flex; height: 15px; align-items: stretch; background: #e4e6ea; }
.ptabs button { display: flex; align-items: center; gap: 1px; padding: 0 5px 0 3px; background: #d9dbdf; border-radius: 3px 8px 0 0; }
.ptabs .on { background: #f5f6f9; }
.ptabs button svg { width: 11px; height: 11px; }
.cog { width: 11px; height: 11px; margin: 2px 1px 0 auto; }
.ltools { display: flex; gap: 5px; height: 15px; padding: 0 4px; align-items: center; background: #f3f4f8; }
.ltools svg { width: 12px; height: 12px; }
.tablebox { flex: 1; background: #fff; }
table { width: 100%; table-layout: fixed; border-collapse: collapse; }
th, td { padding: 0; height: 13px; font-weight: 400; text-align: left; white-space: nowrap; overflow: hidden; }
th { height: 17px; }
th:first-child, td:first-child { padding-left: 5px; }
th.mid, td.mid { text-align: center; }
th.mat { padding-left: 3px; }
td.mid svg { width: 10px; height: 10px; margin: 0 auto; }
.c-cur { width: 44px; }
.c-ic { width: 12px; }
.c-mat { width: 58px; }
.c-line { width: 26px; }
.bold td { font-weight: 700; }
.sel { background: #0a74d4; color: #d6e8fa; }
.swatch { display: block; width: 7px; height: 7px; margin: 0 auto; border: 1px solid #444; }
.sel .swatch { border-color: #cfc0d4; }
.ball { display: block; width: 10px; height: 10px; margin-left: 2px; border-radius: 50%; background: #fff; }
.hbar { display: flex; align-items: center; height: 13px; padding: 0 4px 0 3px; background: #f1f2f4; }
.hbar svg { width: 8px; height: 8px; fill: none; stroke: #333; }
.hbar span { flex: 1; padding: 0 2px; }
.hbar i { display: block; width: 73%; height: 10px; background: #c8cacd; }
.filters { position: relative; display: grid; grid-template-columns: 66px 66px 1fr; margin-top: 5px; padding: 5px 0 4px 1px; border-top: 1px solid #d6d8dc; }
.filters b { position: absolute; right: 3px; bottom: 6px; font-size: 12px; }
label { display: flex; align-items: center; gap: 1px; white-space: nowrap; }
.filters label { height: 12px; }
input[type="checkbox"] { appearance: none; position: relative; flex: none; box-sizing: border-box; width: 10px; height: 10px; margin: 0; border: 1px solid #666; background: #fff; }
input[type="checkbox"]:checked::after { content: ""; position: absolute; left: 1px; top: 1px; width: 5px; height: 2px; border: solid #444; border-width: 0 0 1px 1px; transform: rotate(-48deg); }

.snaps { display: flex; gap: 5px; height: 22px; align-items: center; padding: 1px 0 0 6px; box-sizing: border-box; }
.snaps .project input, .snaps .disable input { border-color: #ccc; background: #e6e8ea; }
.snaps .disable { margin-left: 8px; }
.status { display: flex; height: 12px; align-items: center; border-top: 1px solid #d3d5d9; background: #f0f1f4; white-space: nowrap; }
.status > * { line-height: 11px; padding: 0 5px; border-right: 1px solid #dcdee2; }
.world, .status .on { font-weight: 700; background: #e5eefa; color: #222; }
.status .coord { width: 50px; text-align: center; }
.layer { display: flex; align-items: center; gap: 1px; width: 105px; }
.layer i { width: 8px; height: 8px; background: #fbe908; border: 1px solid #665c10; }
.status .saved { border: 0; }

.marks { position: absolute; left: 0; top: -1px; width: 100%; pointer-events: none; }
.mark text { text-anchor: middle; fill: #fff; fill-opacity: .13; stroke: #808080; stroke-opacity: .16; stroke-width: 2; paint-order: stroke; font-weight: 700; font-size: 60px; }
.latin { font-family: "Liberation Serif", serif; }
.han { font-family: "Noto Sans CJK SC", sans-serif; }
.head { text-anchor: middle; font: 600 50px "Open Sans", sans-serif; fill: #9a9a9a; fill-opacity: .5; stroke: #9a9a9a; stroke-opacity: .3; }
.brand { text-anchor: middle; font: 700 34px "Noto Sans CJK SC", sans-serif; fill: #9b9ca0; fill-opacity: .8; stroke: #c8c8ca; stroke-width: .5; }
.udemy { font: 700 9px "Open Sans", sans-serif; fill: #c6c8cc; }
</style>
